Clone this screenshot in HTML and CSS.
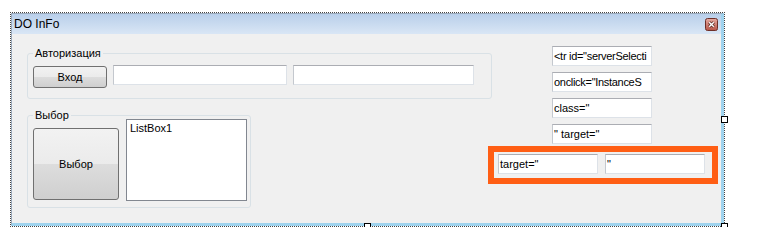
FILE: index.html
```html
<!DOCTYPE html>
<html lang="ru">
<head>
<meta charset="UTF-8">
<title>DO InFo</title>
<link rel="stylesheet" href="styles.css">
</head>
<body>
<div class="designer">
  <div class="form">
    <div class="titlebar">
      <span class="title">DO InFo</span>
      <span class="close">
        <svg width="13" height="13" viewBox="0 0 13 13">
          <defs>
            <linearGradient id="closeGrad" x1="0" y1="0" x2="0" y2="1">
              <stop offset="0" stop-color="#e6aba2"/>
              <stop offset="1" stop-color="#b65447"/>
            </linearGradient>
          </defs>
          <rect x="0.5" y="0.5" width="12" height="12" rx="2" fill="url(#closeGrad)" stroke="#6e2f28"/>
          <path d="M4.2 4.2L8.8 8.8M8.8 4.2L4.2 8.8" stroke="#5a2620" stroke-width="3"/>
          <path d="M4.2 4.2L8.8 8.8M8.8 4.2L4.2 8.8" stroke="#fff" stroke-width="1.4"/>
        </svg>
      </span>
    </div>
    <div class="client">
      <div class="left">
        <fieldset class="group group-auth">
          <legend>Авторизация</legend>
          <div class="row">
            <button class="btn btn-login">Вход</button>
            <div class="textbox tb-login"></div>
            <div class="textbox tb-pass"></div>
          </div>
        </fieldset>
        <fieldset class="group group-choice">
          <legend>Выбор</legend>
          <div class="row">
            <button class="btn btn-choice">Выбор</button>
            <div class="listbox">ListBox1</div>
          </div>
        </fieldset>
      </div>
      <div class="right">
        <div class="textbox tb-small tb-tight">&lt;tr id="serverSelecti</div>
        <div class="textbox tb-small tb-tight">onclick="InstanceS</div>
        <div class="textbox tb-small">class="</div>
        <div class="textbox tb-small">" target="</div>
        <div class="pair">
          <div class="textbox tb-pair">target="</div>
          <div class="textbox tb-pair">"</div>
          <div class="highlight"></div>
        </div>
      </div>
    </div>
  </div>
  <span class="handle h-right"></span>
  <span class="handle h-bottom"></span>
  <span class="handle h-corner"></span>
</div>
</body>
</html>
```
FILE: styles.css
```css
* {
  box-sizing: border-box;
}
body {
  margin: 0;
  background: #fff;
  color: #000;
  font-family: "Liberation Sans", Arial, sans-serif;
  font-size: 11px;
}
.designer {
  position: relative;
  margin: 12px 0 0 10px;
  width: 715px;
  height: 215px;
  border: 1px dotted #444;
}
.form {
  height: 100%;
  display: flex;
  flex-direction: column;
  background: #f0f0f0;
  border-left: 1px solid #9aa9bb;
  border-top: 1px solid #9aa9bb;
  border-right: 3px solid #9fd3ee;
  border-bottom: 3px solid #9fd3ee;
}
.titlebar {
  flex: none;
  height: 20px;
  display: flex;
  align-items: center;
  justify-content: space-between;
  padding: 0 3px 0 2px;
  background: linear-gradient(#b9cfea, #d9e6f5);
}
.title {
  font-size: 12px;
}
.close {
  display: flex;
}
.client {
  flex: 1;
  display: flex;
  align-items: flex-start;
  padding: 13px 0 0 15px;
}
.left {
  width: 465px;
  display: flex;
  flex-direction: column;
  gap: 10px;
}
.group {
  margin: 0;
  min-width: 0;
  border: 1px solid #d9e1e6;
  border-radius: 3px;
}
.group legend {
  padding: 0 2px;
  line-height: 12px;
}
.row {
  display: flex;
  align-items: flex-start;
}
.group-auth {
  padding: 0 17px 10px 5px;
}
.group-auth .row {
  gap: 6px;
  padding-top: 7px;
}
.group-auth .textbox {
  margin-top: -1px;
}
.tb-login {
  width: 174px;
}
.tb-pass {
  width: 181px;
}
.group-choice {
  align-self: flex-start;
  width: 224px;
  padding: 0 3px 6px 5px;
}
.group-choice .row {
  gap: 7px;
}
.btn {
  font-family: inherit;
  font-size: 11px;
  color: #000;
  padding: 0;
  border: 1px solid #707070;
  border-radius: 3px;
  background: linear-gradient(#f2f2f2 0%, #ebebeb 50%, #dddddd 50%, #cfcfcf 100%);
}
.btn-login {
  width: 74px;
  height: 22px;
}
.btn-choice {
  width: 86px;
  height: 72px;
  margin-top: 7px;
}
.listbox {
  width: 121px;
  height: 82px;
  margin-top: -2px;
  padding: 2px 3px;
  background: #fff;
  border: 1px solid #828790;
}
.textbox {
  height: 20px;
  padding: 0 1px;
  line-height: 18px;
  white-space: nowrap;
  overflow: hidden;
  background: #fff;
  border: 1px solid #dde2e8;
  border-top-color: #abadb3;
  border-left-color: #c4c8ce;
}
.right {
  width: 207px;
  display: flex;
  flex-direction: column;
  align-items: flex-start;
  gap: 6px;
  margin: -1px 0 0 6px;
}
.tb-small {
  width: 100px;
  margin-left: 54px;
}
.tb-tight {
  letter-spacing: -0.3px;
}
.pair {
  position: relative;
  display: flex;
  gap: 7px;
  margin-top: 4px;
}
.tb-pair {
  width: 100px;
}
.highlight {
  position: absolute;
  left: -10px;
  top: -8px;
  width: 230px;
  height: 38px;
  border: 6px solid #ff5e14;
}
.handle {
  position: absolute;
  width: 7px;
  height: 7px;
  background: #fff;
  border: 1px solid #000;
}
.h-right {
  right: -4px;
  top: 103px;
}
.h-bottom {
  left: 353px;
  bottom: -4px;
}
.h-corner {
  right: -4px;
  bottom: -4px;
}
```
